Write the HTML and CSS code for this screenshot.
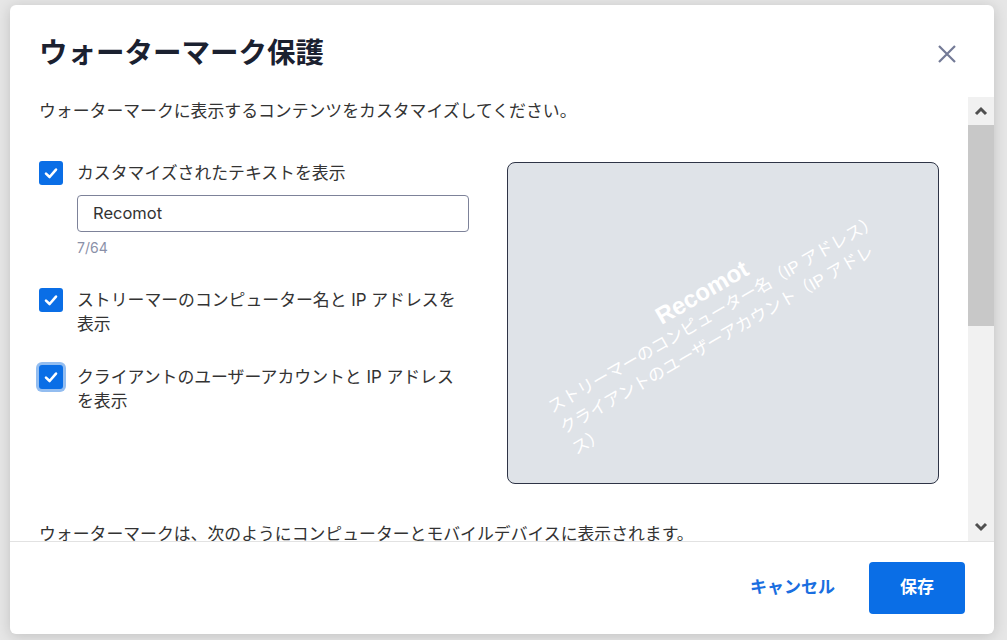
FILE: index.html
```html
<!DOCTYPE html>
<html lang="ja">
<head>
<meta charset="utf-8">
<title>ウォーターマーク保護</title>
<link rel="stylesheet" href="styles.css">
</head>
<body>
<div class="dialog">
  <header class="dlg-header">
    <h1 class="dlg-title">ウォーターマーク保護</h1>
    <button class="close-btn" aria-label="閉じる">
      <svg width="18" height="18" viewBox="0 0 18 18"><path d="M1 1 L17 17 M17 1 L1 17" stroke="#737a96" stroke-width="2.2" fill="none"/></svg>
    </button>
  </header>
  <div class="dlg-body">
    <div class="content">
      <p class="desc">ウォーターマークに表示するコンテンツをカスタマイズしてください。</p>
      <div class="main-row">
        <div class="options">
          <div class="opt">
            <div class="check-row">
              <span class="checkbox"><svg width="24" height="24" viewBox="0 0 24 24"><path d="M7 12.6 L10.6 16 L17 8.6" stroke="#fff" stroke-width="2.6" fill="none" stroke-linecap="round" stroke-linejoin="round"/></svg></span>
              <span class="check-label">カスタマイズされたテキストを表示</span>
            </div>
            <div class="text-input">Recomot</div>
            <div class="counter">7/64</div>
          </div>
          <div class="opt opt-2">
            <div class="check-row">
              <span class="checkbox"><svg width="24" height="24" viewBox="0 0 24 24"><path d="M7 12.6 L10.6 16 L17 8.6" stroke="#fff" stroke-width="2.6" fill="none" stroke-linecap="round" stroke-linejoin="round"/></svg></span>
              <span class="check-label">ストリーマーのコンピューター名と IP アドレスを<br>表示</span>
            </div>
          </div>
          <div class="opt opt-3">
            <div class="check-row">
              <span class="checkbox focused"><svg width="24" height="24" viewBox="0 0 24 24"><path d="M7 12.6 L10.6 16 L17 8.6" stroke="#fff" stroke-width="2.6" fill="none" stroke-linecap="round" stroke-linejoin="round"/></svg></span>
              <span class="check-label">クライアントのユーザーアカウントと IP アドレス<br>を表示</span>
            </div>
          </div>
        </div>
        <div class="preview">
          <div class="wm">
            <div class="wm-name">Recomot</div>
            <div class="wm-line">ストリーマーのコンピューター名（IP アドレス）</div>
            <div class="wm-line">クライアントのユーザーアカウント（IP アドレス）</div>
          </div>
        </div>
      </div>
      <p class="desc bottom-desc">ウォーターマークは、次のようにコンピューターとモバイルデバイスに表示されます。</p>
    </div>
    <div class="scrollbar">
      <div class="sb-btn"><svg width="14" height="10" viewBox="0 0 14 10"><path d="M2 8 L7 3 L12 8" stroke="#505050" stroke-width="3" fill="none"/></svg></div>
      <div class="sb-thumb"></div>
      <div class="sb-track"></div>
      <div class="sb-btn sb-down"><svg width="14" height="10" viewBox="0 0 14 10"><path d="M2 2 L7 7 L12 2" stroke="#505050" stroke-width="3" fill="none"/></svg></div>
    </div>
  </div>
  <footer class="dlg-footer">
    <button class="btn-cancel">キャンセル</button>
    <button class="btn-save">保存</button>
  </footer>
</div>
</body>
</html>
```
FILE: styles.css
```css
html, body {
  margin: 0;
  padding: 0;
}
body {
  width: 1007px;
  height: 640px;
  overflow: hidden;
  background: #e6e6e6;
  font-family: "Inter", "Noto Sans CJK JP", sans-serif;
  color: #333;
}
.dialog {
  margin: 5px 0 0 10px;
  width: 984px;
  height: 629px;
  background: #fff;
  border-radius: 6px;
  box-shadow: 0 2px 14px rgba(0, 0, 0, 0.16);
  display: flex;
  flex-direction: column;
  overflow: hidden;
}
.dlg-header {
  height: 92px;
  flex: none;
  display: flex;
  align-items: center;
  justify-content: space-between;
  padding: 0 35px 0 29px;
}
.dlg-title {
  margin: 0;
  font-family: "Noto Sans CJK JP", sans-serif;
  font-size: 28.5px;
  font-weight: 700;
  color: #1b2130;
  line-height: 36px;
}
.close-btn {
  width: 24px;
  height: 24px;
  border: 0;
  padding: 0;
  background: none;
  display: flex;
  align-items: center;
  justify-content: center;
  margin-top: 5px;
}
.dlg-body {
  flex: 1;
  display: flex;
  min-height: 0;
}
.content {
  flex: 1;
  overflow: hidden;
  padding: 2px 29px 0 29px;
}
.desc {
  margin: 0;
  font-size: 16.85px;
  line-height: 24px;
  color: #333;
}
.main-row {
  display: flex;
  gap: 38px;
  margin-top: 38px;
}
.options {
  width: 430px;
  flex: none;
}
.check-row {
  display: flex;
  gap: 14px;
  align-items: flex-start;
}
.checkbox {
  width: 24px;
  height: 24px;
  flex: none;
  background: #0a6ee6;
  border-radius: 3px;
  display: block;
}
.checkbox svg {
  display: block;
}
.checkbox.focused {
  box-shadow: 0 0 0 3px #93bdf0;
}
.check-label {
  font-size: 16.85px;
  line-height: 24px;
  color: #333;
}
.text-input {
  margin: 10px 0 0 38px;
  width: 392px;
  height: 37px;
  box-sizing: border-box;
  border: 1px solid #7d8299;
  border-radius: 4px;
  padding-left: 15px;
  font-size: 16.5px;
  line-height: 35px;
  color: #333;
}
.counter {
  margin: 7px 0 0 38px;
  font-size: 14px;
  line-height: 18px;
  color: #8a90a8;
}
.opt-2 {
  margin-top: 31px;
}
.opt-3 {
  margin-top: 29px;
}
.preview {
  width: 432px;
  height: 322px;
  flex: none;
  box-sizing: border-box;
  margin-top: 1px;
  background: #dfe3e8;
  border: 1px solid #2e3446;
  border-radius: 8px;
  display: flex;
  align-items: center;
  justify-content: center;
  overflow: hidden;
}
.wm {
  width: 380px;
  flex: none;
  color: #fff;
  font-family: "Liberation Sans", "Noto Sans CJK JP", sans-serif;
  transform: rotate(-30deg) translate(-3px, -1px);
}
.wm-name {
  text-align: center;
  font-size: 24px;
  font-weight: 700;
  line-height: 26px;
}
.wm-line {
  font-size: 17px;
  line-height: 24px;
}
.bottom-desc {
  margin-top: 38px;
}
.scrollbar {
  width: 26px;
  flex: none;
  background: #f1f1f1;
  display: flex;
  flex-direction: column;
}
.sb-btn {
  height: 28px;
  flex: none;
  display: flex;
  align-items: center;
  justify-content: center;
}
.sb-thumb {
  height: 201px;
  flex: none;
  background: #c8c8c8;
}
.sb-track {
  flex: 1;
}
.dlg-footer {
  height: 93px;
  flex: none;
  box-sizing: border-box;
  border-top: 1px solid #e2e2e2;
  padding: 20px 29px 20px 0;
  display: flex;
  justify-content: flex-end;
  align-items: center;
}
.btn-cancel {
  height: 52px;
  padding: 0 16px 4px;
  margin-right: 18px;
  border: 0;
  background: none;
  color: #1a6ee0;
  font-family: "Noto Sans CJK JP", sans-serif;
  font-size: 17px;
  font-weight: 700;
  line-height: 44px;
}
.btn-save {
  width: 96px;
  height: 52px;
  padding: 0 0 4px;
  border: 0;
  border-radius: 4px;
  background: #0a6ee6;
  color: #fff;
  font-family: "Noto Sans CJK JP", sans-serif;
  font-size: 17px;
  font-weight: 700;
  line-height: 44px;
}
```
